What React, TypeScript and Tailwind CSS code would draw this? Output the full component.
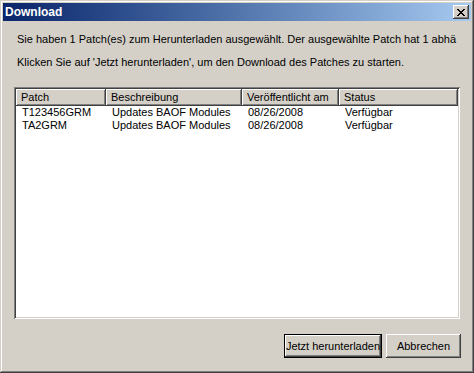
import React from 'react';

const raised =
  'shadow-[inset_-1px_-1px_#404040,inset_1px_1px_#ffffff,inset_-2px_-2px_#808080,inset_2px_2px_#d4d0c8]';

const columns = [
  { title: 'Patch', width: 'w-[90px]' },
  { title: 'Beschreibung', width: 'w-[136px]' },
  { title: 'Veröffentlicht am', width: 'w-[97px]' },
  { title: 'Status', width: 'flex-1' },
];

const patches = [
  ['T123456GRM', 'Updates BAOF Modules', '08/26/2008', 'Verfügbar'],
  ['TA2GRM', 'Updates BAOF Modules', '08/26/2008', 'Verfügbar'],
];

const widths = ['w-[90px]', 'w-[136px]', 'w-[97px]', 'flex-1'];

const CloseButton: React.FC = () => (
  <button
    className={`w-[16px] h-[14px] bg-[#d4d0c8] flex items-center justify-center ${raised}`}
  >
    <svg width="8" height="7" viewBox="0 0 8 7" shapeRendering="crispEdges">
      <path
        d="M0 0h2v1h1v1h2V1h1V0h2v1H7v1H6v1H5v1h1v1h1v1h1v1H6V6H5V5H3v1H2v1H0V6h1V5h1V4h1V3H2V2H1V1H0z"
        fill="#000"
      />
    </svg>
  </button>
);

export default function App() {
  return (
    <div
      className="w-[474px] h-[373px] bg-[#d4d0c8] p-[3px] flex flex-col text-[11px] text-black shadow-[inset_-1px_-1px_#404040,inset_1px_1px_#d4d0c8,inset_-2px_-2px_#808080,inset_2px_2px_#ffffff]"
      style={{ fontFamily: '"Liberation Sans", Arial, sans-serif' }}
    >
      {/* title bar */}
      <div className="h-[18px] flex items-center pl-[2px] pr-[2px] bg-gradient-to-r from-[#0a246a] to-[#a6caf0]">
        <span className="text-white font-bold text-[12px] leading-none">Download</span>
        <div className="ml-auto">
          <CloseButton />
        </div>
      </div>

      <div className="flex flex-col flex-1 pl-[11px] pr-[10px]">
        <div className="pl-[3px] mt-[12px] leading-[13px] whitespace-nowrap overflow-hidden">
          Sie haben 1 Patch(es) zum Herunterladen ausgewählt. Der ausgewählte Patch hat 1 abhä
        </div>
        <div className="pl-[3px] mt-[10px] leading-[13px] whitespace-nowrap">
          Klicken Sie auf 'Jetzt herunterladen', um den Download des Patches zu starten.
        </div>

        {/* list */}
        <div className="mt-[18px] w-[446px] h-[232px] bg-white p-[2px] shadow-[inset_1px_1px_#808080,inset_-1px_-1px_#ffffff,inset_2px_2px_#404040,inset_-2px_-2px_#d4d0c8]">
          <div className="flex h-[17px]">
            {columns.map((c) => (
              <div
                key={c.title}
                className={`${c.width} bg-[#d4d0c8] pl-[5px] flex items-center leading-none whitespace-nowrap overflow-hidden ${raised}`}
              >
                {c.title}
              </div>
            ))}
          </div>
          {patches.map((row) => (
            <div key={row[0]} className="flex h-[13px] items-center leading-none">
              {row.map((cell, i) => (
                <div key={i} className={`${widths[i]} pl-[6px] whitespace-nowrap overflow-hidden`}>
                  {cell}
                </div>
              ))}
            </div>
          ))}
        </div>

        {/* buttons */}
        <div className="flex justify-end gap-[4px] mt-[15px]">
          <button className="w-[98px] h-[24px] border border-black bg-[#d4d0c8] shadow-[inset_-1px_-1px_#404040,inset_1px_1px_#ffffff,inset_-2px_-2px_#808080] overflow-hidden whitespace-nowrap flex items-center justify-center">
            Jetzt herunterladen
          </button>
          <button className={`w-[75px] h-[24px] bg-[#d4d0c8] ${raised} flex items-center justify-center`}>
            Abbrechen
          </button>
        </div>
      </div>
    </div>
  );
}
